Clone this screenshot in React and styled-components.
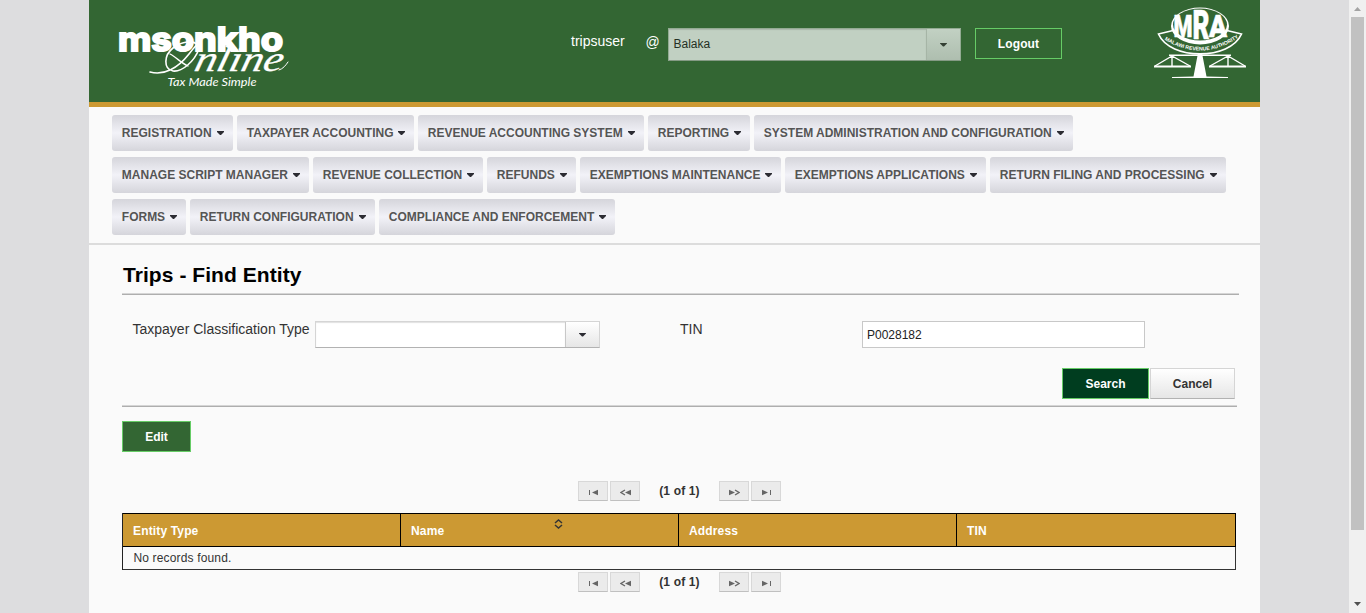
import React from "react";
import styled, { createGlobalStyle } from "styled-components";

const GlobalStyle = createGlobalStyle`
  * { box-sizing: border-box; }
  html, body { margin: 0; padding: 0; overflow: hidden; }
  body {
    background: #dddddf;
    font-family: "Liberation Sans", Arial, sans-serif;
    font-size: 12px;
    color: #333;
  }
`;

const Screen = styled.div`
  display: flex;
  height: 613px;
  width: 1366px;
  overflow: hidden;
`;

const Page = styled.div`
  width: 1171px;
  margin-left: 89px;
  background: #fafafa;
`;

const Header = styled.header`
  display: flex;
  align-items: flex-start;
  height: 107px;
  background: #336633;
  border-bottom: 5px solid #cc9933;
  color: #fff;
`;

const BrandLogo = styled.svg`
  width: 190px;
  height: 80px;
  margin: 18px 0 0 20px;
  flex: none;
`;

const UserName = styled.span`
  width: 74.600px;
  margin-left: 272px;
  padding-top: 33px;
  font-size: 14px;
  line-height: 16px;
`;

const At = styled.span`
  width: 22.400px;
  padding-top: 34px;
  font-size: 14px;
  line-height: 16px;
`;

const Select = styled.div`
  display: flex;
  flex: none;
  width: ${(p) => p.$w}px;
  height: ${(p) => p.$h}px;
  border: 1px solid #d5d5d5;
  border-bottom-color: #b2b2b2;
  background: #fff;
  ${(p) => p.$muted && `
    margin-top: 28px;
    border-color: #93ab93;
    border-bottom-color: #849a84;
    background: #c1d0c2;
  `}
`;

const SelectValue = styled.div`
  flex: 1;
  padding-left: 4.500px;
  line-height: 31px;
  color: #243024;
  box-shadow: inset 0 1px 1px rgba(0, 0, 0, 0.12);
`;

const SelectTrigger = styled.div`
  display: flex;
  align-items: center;
  justify-content: center;
  width: 34px;
  border-left: 1px solid ${(p) => (p.$muted ? "#a6b5a6" : "#c8c8c8")};
  background: ${(p) =>
    p.$muted
      ? "linear-gradient(#c2d1c3, #aebeaf)"
      : "linear-gradient(#ffffff, #e6e6e6)"};
`;

const Button = styled.button`
  height: 31px;
  width: ${(p) => p.$w}px;
  padding: 1px 0 0 0;
  font: bold 12px/28px "Liberation Sans", Arial, sans-serif;
  letter-spacing: ${(p) => p.$ls || 0}px;
  color: #fff;
  background: ${(p) => (p.$dark ? "#003d1f" : "#336633")};
  border: 1px solid #66cc66;
  ${(p) => p.$plain && `
    color: #333;
    background: linear-gradient(#ffffff, #e6e6e6);
    border-color: #d5d5d5;
    border-bottom-color: #b2b2b2;
  `}
`;

const LogoutSlot = styled.div`
  margin: 28px 0 0 14px;
`;

const AgencyLogo = styled.svg`
  width: 94px;
  height: 76px;
  margin: 5px 0 0 91px;
  flex: none;
`;

const Nav = styled.nav`
  display: flex;
  flex-direction: column;
  gap: 6px;
  height: 138px;
  padding: 8px 0 0 23px;
  border-bottom: 2px solid #dcdcdc;
`;

const NavRow = styled.div`
  display: flex;
  gap: 4px;
`;

const NavItem = styled.div`
  display: flex;
  align-items: center;
  justify-content: space-between;
  width: ${(p) => p.$w}px;
  height: 36px;
  padding: 0 9px 0 9.800px;
  border-radius: 3px;
  background: linear-gradient(#d5d5db, #f2f2f8 50%, #d5d5db);
  color: #555;
  font-weight: bold;
  font-size: 12px;
  white-space: nowrap;
`;

const Caret = styled.i`
  width: 7px;
  height: 4px;
  flex: none;
  background: ${(p) => p.$color || "#2c2c33"};
  clip-path: polygon(0 0, 100% 0, 100% 25%, 57% 100%, 43% 100%, 0 25%);
`;

const Content = styled.main`
  display: flex;
  flex-direction: column;
  width: 1150px;
  padding-left: 33px;
`;

const Title = styled.h1`
  height: 48px;
  margin: 0;
  padding: 18px 0 0 1px;
  font-size: 21px;
  line-height: 24px;
  letter-spacing: 0.06px;
  color: #000;
`;

const Rule = styled.div`
  height: 2px;
  width: ${(p) => p.$w}px;
  border-top: 1px solid #d5d5d5;
  border-bottom: 1px solid #aeaeae;
`;

const Fields = styled.div`
  display: flex;
  height: 73px;
  padding: 26px 0 0 10.500px;
`;

const Label = styled.label`
  width: ${(p) => p.$w}px;
  font-size: 14px;
  line-height: 16px;
  white-space: nowrap;
`;

const TinCell = styled.div`
  display: flex;
  margin-left: 80px;
`;

const TextInput = styled.input`
  width: 283px;
  height: 27px;
  padding: 0 4px;
  border: 1px solid #c8c8c8;
  background: #fff;
  font: 12px "Liberation Sans", Arial, sans-serif;
  color: #222;
  outline: 0;
`;

const Actions = styled.div`
  display: flex;
  gap: 1px;
  width: 1113px;
  height: 37px;
  justify-content: flex-end;
`;

const Toolbar = styled.div`
  height: 45px;
  margin-top: 14px;
`;

const Paginator = styled.div`
  display: flex;
  gap: 2px;
  padding-left: 456px;
  height: 20px;
  margin: ${(p) => p.$m};
`;

const PageButton = styled.div`
  display: flex;
  align-items: center;
  justify-content: center;
  width: 30px;
  height: 20px;
  border: 1px solid #d8d8d8;
  border-bottom-color: #c0c0c0;
  background: #ebebeb;
  padding-top: 3px;
`;

const PageStatus = styled.span`
  width: 75px;
  text-align: center;
  font-weight: bold;
  line-height: 20px;
  letter-spacing: 0.15px;
`;

const Table = styled.table`
  width: 1114px;
  border-collapse: separate;
  border-spacing: 0;
  table-layout: fixed;
  border-left: 1px solid #222;
`;

const Th = styled.th`
  position: relative;
  width: ${(p) => p.$w}px;
  height: 34px;
  padding: 1px 0 0 10px;
  border: 1px solid #000;
  border-left: 0;
  background: #cc9933;
  color: #fff;
  text-align: left;
  letter-spacing: 0.15px;
`;

const SortIcon = styled.svg`
  position: absolute;
  left: 153px;
  top: 5px;
`;

const Td = styled.td`
  height: 23px;
  padding: 0 0 0 10.500px;
  border: 1px solid #333;
  border-width: 0 1px 1px 0;
  letter-spacing: 0.15px;
`;

const Scrollbar = styled.div`
  display: flex;
  flex-direction: column;
  align-items: center;
  justify-content: space-between;
  width: 17px;
  margin-left: auto;
  background: #f0f0f0;
`;

const ScrollThumb = styled.div`
  width: 13px;
  height: 513px;
  margin-bottom: auto;
  background: #c1c1c1;
`;

const ScrollArrow = styled.svg`
  display: block;
  width: 17px;
  height: 17px;
`;

const navRows = [
  [
    ["REGISTRATION", 121],
    ["TAXPAYER ACCOUNTING", 177],
    ["REVENUE ACCOUNTING SYSTEM", 226],
    ["REPORTING", 102],
    ["SYSTEM ADMINISTRATION AND CONFIGURATION", 319],
  ],
  [
    ["MANAGE SCRIPT MANAGER", 197],
    ["REVENUE COLLECTION", 170],
    ["REFUNDS", 89],
    ["EXEMPTIONS MAINTENANCE", 201],
    ["EXEMPTIONS APPLICATIONS", 201],
    ["RETURN FILING AND PROCESSING", 236],
  ],
  [
    ["FORMS", 74],
    ["RETURN CONFIGURATION", 185],
    ["COMPLIANCE AND ENFORCEMENT", 236],
  ],
];

const pageIcons = {
  first: <><path d="M0 1h1v5H0z" /><path d="M9 .8v5.400L3 3.500z" /></>,
  prev: <><path d="M5 1L1 3.500 5 6" fill="none" stroke="#666" strokeWidth="1.300" /><path d="M11 .8v5.400L5 3.500z" /></>,
  next: <><path d="M0 .8v5.400l6-2.700z" /><path d="M6 1l4 2.500L6 6" fill="none" stroke="#666" strokeWidth="1.300" /></>,
  last: <><path d="M0 .8v5.400l6-2.700z" /><path d="M8 1h1v5H8z" /></>,
};

function PageIcon({ kind }) {
  const w = kind === "first" || kind === "last" ? 9 : 11;
  return (
    <PageButton>
      <svg width={w} height="7" viewBox={`0 0 ${w} 7`} fill="#666">
        {pageIcons[kind]}
      </svg>
    </PageButton>
  );
}

function Pager({ margin }) {
  return (
    <Paginator $m={margin}>
      <PageIcon kind="first" />
      <PageIcon kind="prev" />
      <PageStatus>(1 of 1)</PageStatus>
      <PageIcon kind="next" />
      <PageIcon kind="last" />
    </Paginator>
  );
}

function Msonkho() {
  return (
    <BrandLogo viewBox="109 18 190 80" fill="#fff">
      <text x="118" y="51.300" fontFamily="Inter, sans-serif" fontWeight="700" fontSize="33"
        textLength="165" lengthAdjust="spacingAndGlyphs" stroke="#fff" strokeWidth="2"
        strokeLinejoin="miter">
        msonkho
      </text>
      <g fill="none" stroke="#fff" strokeLinecap="round">
        <path d="M150 72C164 76 178 68 189 54C199 41 203 39 199 49C194 62 182 72 173 71C163 69 164 55 173 48C182 41 193 40 198 45" strokeWidth="1.600" />
        <path d="M170 54C176 57 181 63 188 66" strokeWidth="1.300" />
        <path d="M279 70C283 69 286 65 288 62" />
      </g>
      <text transform="translate(193 71) skewX(-14)" fontFamily="Liberation Serif, serif" fontStyle="italic"
        fontSize="36" textLength="88" lengthAdjust="spacingAndGlyphs" stroke="#fff" strokeWidth="0.300">
        nline
      </text>
      <text x="167.500" y="86.300" fontFamily="Lato, sans-serif" fontStyle="italic" fontSize="10.500"
        textLength="89" lengthAdjust="spacingAndGlyphs">
        Tax Made Simple
      </text>
    </BrandLogo>
  );
}

function Mra() {
  const letter = { fontFamily: "Roboto, sans-serif", fontWeight: 900, lengthAdjust: "spacingAndGlyphs" };
  return (
    <AgencyLogo viewBox="1153 5 94 76" fill="#fff">
      <defs>
        <path id="ribbon" d="M1162 38Q1200 63 1238 38" />
      </defs>
      <path d="M1173 30.500L1158.500 34C1170 60.500 1230 60.500 1241.500 34L1227 30.500" fill="none" stroke="#fff" strokeWidth="1.700" />
      <ellipse cx="1200" cy="26" rx="29" ry="18.500" />
      <ellipse cx="1200" cy="24.500" rx="27" ry="16" fill="#336633" />
      <text {...letter} x="1173.500" y="36.500" fontSize="31" textLength="19" stroke="#fff" strokeWidth="0.600">M</text>
      <text {...letter} x="1192.500" y="38.500" fontSize="40" textLength="17" stroke="#fff" strokeWidth="0.600">R</text>
      <text {...letter} x="1209" y="36.500" fontSize="31" textLength="18" stroke="#fff" strokeWidth="0.600">A</text>
      <text fontFamily="Liberation Sans, sans-serif" fontWeight="bold" fontSize="5.200">
        <textPath href="#ribbon" startOffset="3" textLength="79" lengthAdjust="spacingAndGlyphs">MALAWI REVENUE AUTHORITY</textPath>
      </text>
      <path d="M1169 54.500h62v1.500h-62z" />
      <path d="M1198 53h4l4.500 23.500 21.500.5v1h-56v-1l21.500-.5z" />
      <g fill="none" stroke="#fff" strokeWidth="1.400">
        <path d="M1155 66L1172 56l18 10M1172 55v12M1210 66l18-10 17 10M1228 55v12" />
        <path d="M1154 66.500h37M1209 66.500h37" strokeWidth="2.200" />
      </g>
    </AgencyLogo>
  );
}

export default function App() {
  return (
    <>
      <GlobalStyle />
      <Screen>
        <Page>
          <Header>
            <Msonkho />
            <UserName>tripsuser</UserName>
            <At>@</At>
            <Select $w={293} $h={33} $muted>
              <SelectValue>Balaka</SelectValue>
              <SelectTrigger $muted><Caret $color="#344034" /></SelectTrigger>
            </Select>
            <LogoutSlot><Button $w={87} $ls={0.1}>Logout</Button></LogoutSlot>
            <Mra />
          </Header>
          <Nav>
            {navRows.map((row, i) => (
              <NavRow key={i}>
                {row.map(([text, w]) => (
                  <NavItem key={text} $w={w}>
                    <span>{text}</span>
                    <Caret />
                  </NavItem>
                ))}
              </NavRow>
            ))}
          </Nav>
          <Content>
            <Title>Trips - Find Entity</Title>
            <Rule $w={1117} />
            <Fields>
              <Label $w={182.5}>Taxpayer Classification Type</Label>
              <Select $w={285} $h={27}>
                <SelectValue />
                <SelectTrigger><Caret /></SelectTrigger>
              </Select>
              <TinCell>
                <Label $w={182}>TIN</Label>
                <TextInput defaultValue="P0028182" />
              </TinCell>
            </Fields>
            <Actions>
              <Button $w={87} $dark>Search</Button>
              <Button $w={85} $plain>Cancel</Button>
            </Actions>
            <Rule $w={1115} />
            <Toolbar><Button $w={69}>Edit</Button></Toolbar>
            <Pager margin="15px 0 12px" />
            <Table>
              <thead>
                <tr>
                  <Th $w={278}>Entity Type</Th>
                  <Th $w={278}>
                    Name
                    <SortIcon width="9" height="10" viewBox="0 0 9 10" fill="none" stroke="#333" strokeWidth="1.500">
                      <path d="M1 4l3.500-3L8 4M1 6l3.500 3L8 6" />
                    </SortIcon>
                  </Th>
                  <Th $w={278}>Address</Th>
                  <Th $w={279}>TIN</Th>
                </tr>
              </thead>
              <tbody><tr><Td colSpan={4}>No records found.</Td></tr></tbody>
            </Table>
            <Pager margin="2px 0 0" />
          </Content>
        </Page>
        <Scrollbar>
          <ScrollArrow viewBox="0 0 17 17" fill="#a3a3a3"><path d="M5 11h7L8.500 7z" /></ScrollArrow>
          <ScrollThumb />
          <ScrollArrow viewBox="0 0 17 17" fill="#505050"><path d="M5 6h7l-3.500 4z" /></ScrollArrow>
        </Scrollbar>
      </Screen>
    </>
  );
}
